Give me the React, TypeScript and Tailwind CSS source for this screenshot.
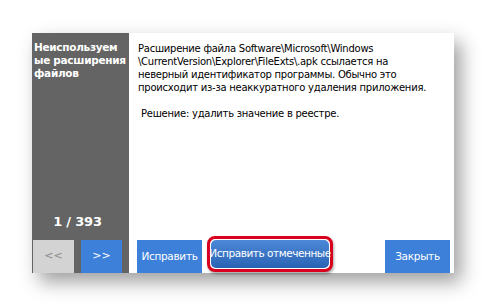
import React from "react";

const font = { fontFamily: '"DejaVu Sans", Tahoma, sans-serif' };

const bodyLines = [
  "Расширение файла Software\\Microsoft\\Windows",
  "\\CurrentVersion\\Explorer\\FileExts\\.apk ссылается на",
  "неверный идентификатор программы. Обычно это",
  "происходит из-за неаккуратного удаления приложения.",
];

export default function App() {
  return (
    <div className="w-[486px] h-[306px] bg-white pt-[33px] pl-[32px]" style={font}>
      <div className="flex w-[422px] h-[240px] bg-white shadow-[7px_9px_18px_rgba(0,0,0,0.38)]">
        {/* Sidebar */}
        <div className="flex flex-col w-[97px] bg-[#646464]">
          <div className="pt-[8px] pl-[2px] text-[10.5px] leading-[13px] font-bold text-white tracking-[-0.3px]">
            <div>Неиспользуем</div>
            <div>ые расширения</div>
            <div>файлов</div>
          </div>
          <div className="flex-1" />
          <div className="text-center pr-[6px] text-[13px] font-bold text-white tracking-[-0.2px] mb-[9px]">1 / 393</div>
          <div className="flex gap-[7px] pl-[1px]">
            <button className="w-[41px] h-[33px] bg-[#d3d3d3] text-[#8a8a8a] text-[11px]">&lt;&lt;</button>
            <button className="w-[41px] h-[33px] bg-[#3d80da] text-white text-[11px]">&gt;&gt;</button>
          </div>
        </div>

        {/* Content */}
        <div className="flex flex-1 flex-col">
          <div className="pt-[9px] pl-[9px] text-[10px] leading-[13px] text-black tracking-[-0.25px] whitespace-nowrap">
            {bodyLines.map((l) => (
              <div key={l}>{l}</div>
            ))}
            <div className="mt-[13px] pl-[3px]">Решение: удалить значение в реестре.</div>
          </div>
          <div className="flex-1" />
          <div className="flex items-end pl-[8px] pr-[4px]">
            <button className="w-[65px] h-[33px] bg-[#3d80da] text-white text-[10.5px] tracking-[-0.3px]">Исправить</button>
            <div className="ml-[5px] mb-[1px] p-[1px] rounded-[8px] border-[3px] border-[#d8001c] bg-white shadow-[1px_2px_3px_rgba(0,0,0,0.35)]">
              <div className="flex items-center justify-center w-[118px] h-[28px] rounded-[5px] bg-gradient-to-b from-[#4d89d8] to-[#2a63b4] text-white text-[10.5px] tracking-[-0.45px] whitespace-nowrap">
                Исправить отмеченные
              </div>
            </div>
            <div className="flex-1" />
            <button className="w-[65px] h-[33px] bg-[#3d80da] text-white text-[10.5px] tracking-[-0.3px]">Закрыть</button>
          </div>
        </div>
      </div>
    </div>
  );
}
